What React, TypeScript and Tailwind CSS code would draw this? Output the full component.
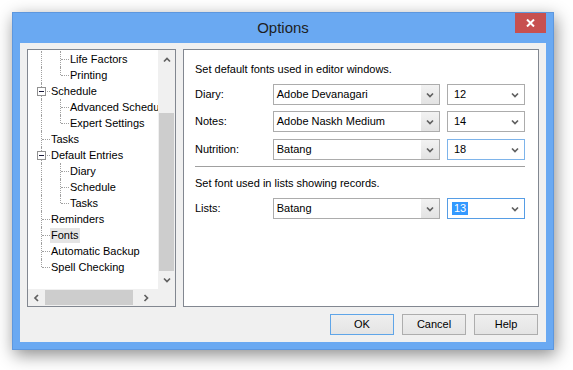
import React from "react";

type Line = "full" | "top" | null;

type TreeItem = {
  label: string;
  level: 0 | 1;
  root: Line;
  child?: Line;
  box?: boolean;
  selected?: boolean;
};

const tree: TreeItem[] = [
  { label: "Life Factors", level: 1, root: "full", child: "full" },
  { label: "Printing", level: 1, root: "full", child: "top" },
  { label: "Schedule", level: 0, root: "full", box: true },
  { label: "Advanced Schedule", level: 1, root: "full", child: "full" },
  { label: "Expert Settings", level: 1, root: "full", child: "top" },
  { label: "Tasks", level: 0, root: "full" },
  { label: "Default Entries", level: 0, root: "full", box: true },
  { label: "Diary", level: 1, root: "full", child: "full" },
  { label: "Schedule", level: 1, root: "full", child: "full" },
  { label: "Tasks", level: 1, root: "full", child: "top" },
  { label: "Reminders", level: 0, root: "full" },
  { label: "Fonts", level: 0, root: "full", selected: true },
  { label: "Automatic Backup", level: 0, root: "full" },
  { label: "Spell Checking", level: 0, root: "top" },
];

function Chevron({ dir = "down" }: { dir?: "down" | "up" | "left" | "right" }) {
  const d = {
    down: "M1 1.5 L4 4.5 L7 1.5",
    up: "M1 4.5 L4 1.5 L7 4.5",
    left: "M5 1 L2 4 L5 7",
    right: "M2.5 1 L5.5 4 L2.5 7",
  }[dir];
  const vertical = dir === "left" || dir === "right";
  return (
    <svg
      width={vertical ? 8 : 8}
      height={vertical ? 8 : 6}
      viewBox={vertical ? "0 0 8 8" : "0 0 8 6"}
      className="block"
    >
      <path d={d} fill="none" stroke="#606060" strokeWidth="1.7" />
    </svg>
  );
}

function TreeRow({ item }: { item: TreeItem }) {
  return (
    <div className="relative h-4 shrink-0">
      {item.root && (
        <div
          className={`absolute left-[13px] top-0 w-0 border-l border-dotted border-[#a0a0a0] ${
            item.root === "full" ? "h-4" : "h-2"
          }`}
        />
      )}
      {item.level === 1 && item.child && (
        <div
          className={`absolute left-[32px] top-0 w-0 border-l border-dotted border-[#a0a0a0] ${
            item.child === "full" ? "h-4" : "h-2"
          }`}
        />
      )}
      <div
        className={`absolute top-2 h-0 w-[8px] border-t border-dotted border-[#a0a0a0] ${
          item.level === 0 ? "left-[14px]" : "left-[33px]"
        }`}
      />
      {item.box && (
        <div className="absolute left-[9px] top-[4px] flex h-[9px] w-[9px] items-center justify-center border border-[#919191] bg-white">
          <div className="h-px w-[5px] bg-[#1a1a3a]" />
        </div>
      )}
      <div className={`flex h-4 items-center ${item.level === 0 ? "pl-[22px]" : "pl-[41px]"}`}>
        <span
          className={`whitespace-nowrap px-[1px] leading-[15px] text-black ${
            item.selected ? "bg-[#e5e5e5]" : ""
          }`}
        >
          {item.label}
        </span>
      </div>
    </div>
  );
}

function FontCombo({ value }: { value: string }) {
  return (
    <div className="flex h-[21px] w-[168px] border border-[#acacac] bg-white">
      <span className="flex-1 pl-[3px] leading-[19px] text-black">{value}</span>
      <div className="flex w-[18px] items-center justify-center bg-gradient-to-b from-[#f2f2f2] to-[#e3e3e3]">
        <Chevron />
      </div>
    </div>
  );
}

function SizeCombo({ value, focus, selected }: { value: string; focus?: "hover" | "focus"; selected?: boolean }) {
  const border =
    focus === "focus" ? "border-[#569de5]" : focus === "hover" ? "border-[#7eb4ea]" : "border-[#acacac]";
  return (
    <div className={`flex h-[21px] w-[78px] items-center border bg-white ${border}`}>
      <div className="flex-1 pl-[4px]">
        <span
          className={`px-[2px] leading-[13px] inline-block ${
            selected ? "bg-[#3399ff] text-white" : "text-black"
          }`}
        >
          {value}
        </span>
      </div>
      <div className="pr-[5px]">
        <Chevron />
      </div>
    </div>
  );
}

function FontRow({ label, font, size, focus, selected }: {
  label: string;
  font: string;
  size: string;
  focus?: "hover" | "focus";
  selected?: boolean;
}) {
  return (
    <div className="flex h-[21px] items-center">
      <span className="w-[78px] text-black">{label}</span>
      <FontCombo value={font} />
      <div className="ml-[7px]">
        <SizeCombo value={size} focus={focus} selected={selected} />
      </div>
    </div>
  );
}

function Button({ label, primary }: { label: string; primary?: boolean }) {
  return (
    <button
      className={`h-[21px] w-[64px] border bg-gradient-to-b from-[#efefef] to-[#e4e4e4] text-center leading-[19px] text-black ${
        primary ? "border-[#5fa5e8]" : "border-[#adadad]"
      }`}
    >
      {label}
    </button>
  );
}

export default function App() {
  return (
    <div
      className="h-[370px] w-[573px] overflow-hidden bg-white pl-[12px] pt-[12px] text-[11px]"
      style={{ fontFamily: '"Liberation Sans", Arial, sans-serif' }}
    >
      <div className="flex h-[338px] w-[542px] flex-col border border-[#5d97de] bg-[#6aa9f2] shadow-[2px_5px_16px_rgba(0,0,0,0.45)]">
        {/* Title bar */}
        <div className="flex h-[30px] shrink-0 items-start pl-[38px] pr-[7px]">
          <div className="flex h-[30px] flex-1 items-center justify-center pt-[1px] text-[15px] text-[#1e1e1e]">
            Options
          </div>
          <div className="flex h-[20px] w-[31px] items-center justify-center bg-[#c75050]">
            <svg width="9" height="8" viewBox="0 0 9 8">
              <path d="M1 0.5 L8 7.5 M8 0.5 L1 7.5" stroke="#ffffff" strokeWidth="2" />
            </svg>
          </div>
        </div>

        {/* Client area */}
        <div className="mx-[7px] flex h-[299px] flex-col bg-[#f0f0f0] px-[7px] pt-[6px]">
          <div className="flex h-[258px] gap-[7px]">
            {/* Tree */}
            <div className="flex w-[149px] flex-col border border-[#828790] bg-white">
              <div className="flex h-[239px]">
                <div className="flex w-[130px] flex-col overflow-hidden pt-[1px]">
                  {tree.map((item, i) => (
                    <TreeRow key={i} item={item} />
                  ))}
                </div>
                <div className="flex w-[17px] flex-col bg-[#f0f0f0]">
                  <div className="flex h-[17px] items-center justify-center pt-[3px]">
                    <Chevron dir="up" />
                  </div>
                  <div className="h-[46px]" />
                  <div className="mx-[1px] h-[158px] bg-[#cdcdcd]" />
                  <div className="flex flex-1 items-center justify-center">
                    <Chevron dir="down" />
                  </div>
                </div>
              </div>
              <div className="flex h-[17px]">
                <div className="flex w-[130px] items-center bg-[#f0f0f0]">
                  <div className="flex w-[17px] items-center justify-center">
                    <Chevron dir="left" />
                  </div>
                  <div className="my-[1px] h-[15px] w-[88px] bg-[#cdcdcd]" />
                  <div className="flex flex-1 items-center justify-center">
                    <Chevron dir="right" />
                  </div>
                </div>
                <div className="w-[17px] bg-[#f0f0f0]" />
              </div>
            </div>

            {/* Fonts page */}
            <div className="flex w-[356px] flex-col border border-[#828790] bg-white pl-[11px] pr-[13px] pt-[13px]">
              <div className="leading-[13px] text-black">Set default fonts used in editor windows.</div>
              <div className="mt-[8px]">
                <FontRow label="Diary:" font="Adobe Devanagari" size="12" />
              </div>
              <div className="mt-[6px]">
                <FontRow label="Notes:" font="Adobe Naskh Medium" size="14" />
              </div>
              <div className="mt-[7px]">
                <FontRow label="Nutrition:" font="Batang" size="18" focus="hover" />
              </div>
              <div className="mt-[6px] h-px w-[330px] bg-[#a0a0a0]" />
              <div className="mt-[10px] leading-[13px] text-black">Set font used in lists showing records.</div>
              <div className="mt-[8px]">
                <FontRow label="Lists:" font="Batang" size="13" focus="focus" selected />
              </div>
            </div>
          </div>

          {/* Buttons */}
          <div className="mt-[7px] flex justify-end gap-[8px] pr-[1px]">
            <Button label="OK" primary />
            <Button label="Cancel" />
            <Button label="Help" />
          </div>
        </div>
      </div>
    </div>
  );
}
